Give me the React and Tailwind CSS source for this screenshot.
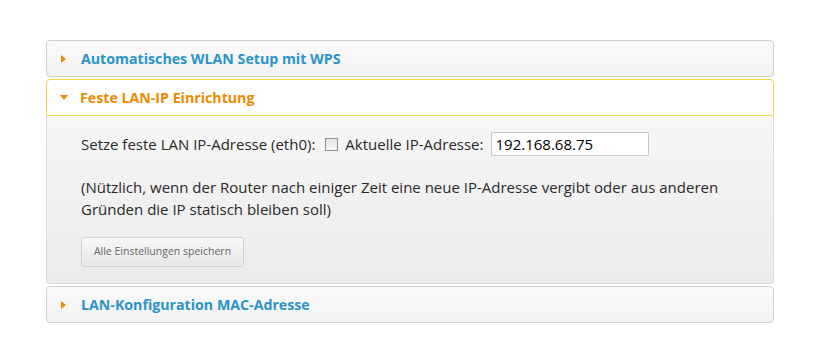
import { useState } from "react"

const Arrow = ({ open }) =>
  open ? (
    <svg width="8" height="5" viewBox="0 0 8 5" className="shrink-0">
      <path d="M0 0 L8 0 L4 5 Z" fill="#ee8a00" />
    </svg>
  ) : (
    <svg width="5" height="8" viewBox="0 0 5 8" className="shrink-0">
      <path d="M0 0 L5 4 L0 8 Z" fill="#ee8a00" />
    </svg>
  )

const Header = ({ title, open }) => (
  <div
    className={
      open
        ? "flex items-center h-[37px] pl-[13px] border border-[#f5d24a] rounded-t-[4px] bg-white"
        : "flex items-center h-[37px] pl-[14px] border border-[#cfcfcf] rounded-[4px] bg-gradient-to-b from-[#fbfbfb] to-[#f2f2f2]"
    }
  >
    <Arrow open={open} />
    <span
      className={
        open
          ? "ml-[12px] text-[14.2px] font-bold text-[#ee8a00]"
          : "ml-[15px] text-[14.2px] font-bold text-[#2b93c9]"
      }
    >
      {title}
    </span>
  </div>
)

export default function App() {
  const [ip, setIp] = useState("192.168.68.75")

  return (
    <div className="w-[818px] h-[360px] bg-white pt-[40px] pl-[46px] font-['Open_Sans',sans-serif] text-[#2a2a2a]">
      <div className="w-[728px] flex flex-col gap-[2px]">
        <Header title="Automatisches WLAN Setup mit WPS" />

        <div>
          <Header title="Feste LAN-IP Einrichtung" open />
          {/* Inhalt */}
          <div className="border border-t-0 border-[#dadada] rounded-b-[4px] bg-gradient-to-b from-[#f6f6f6] to-[#ebebeb] pl-[34px] pt-[16px] pb-[16px]">
            <div className="flex items-center h-[24px] text-[15px]">
              <span>Setze feste LAN IP-Adresse (eth0):</span>
              <input
                type="checkbox"
                className="ml-[10px] w-[13px] h-[13px] appearance-none border border-[#8f8f8f] bg-gradient-to-b from-[#e4e4e4] to-[#f6f6f6]"
              />
              <span className="ml-[7px]">Aktuelle IP-Adresse:</span>
              <input
                value={ip}
                onChange={(e) => setIp(e.target.value)}
                className="ml-[7px] w-[158px] h-[24px] border border-[#c9c9c9] bg-white px-[4px] text-[15px] text-black outline-none"
              />
            </div>

            <p className="mt-[20px] text-[15px] leading-[22px] w-[650px]">
              (Nützlich, wenn der Router nach einiger Zeit eine neue IP-Adresse vergibt oder aus anderen Gründen die IP
              statisch bleiben soll)
            </p>

            <button className="mt-[17px] w-[163px] h-[30px] border border-[#d0d0d0] rounded-[3px] bg-gradient-to-b from-[#f7f7f7] to-[#e8e8e8] text-[10.5px] text-[#666]">
              Alle Einstellungen speichern
            </button>
          </div>
        </div>

        <Header title="LAN-Konfiguration MAC-Adresse" />
      </div>
    </div>
  )
}
